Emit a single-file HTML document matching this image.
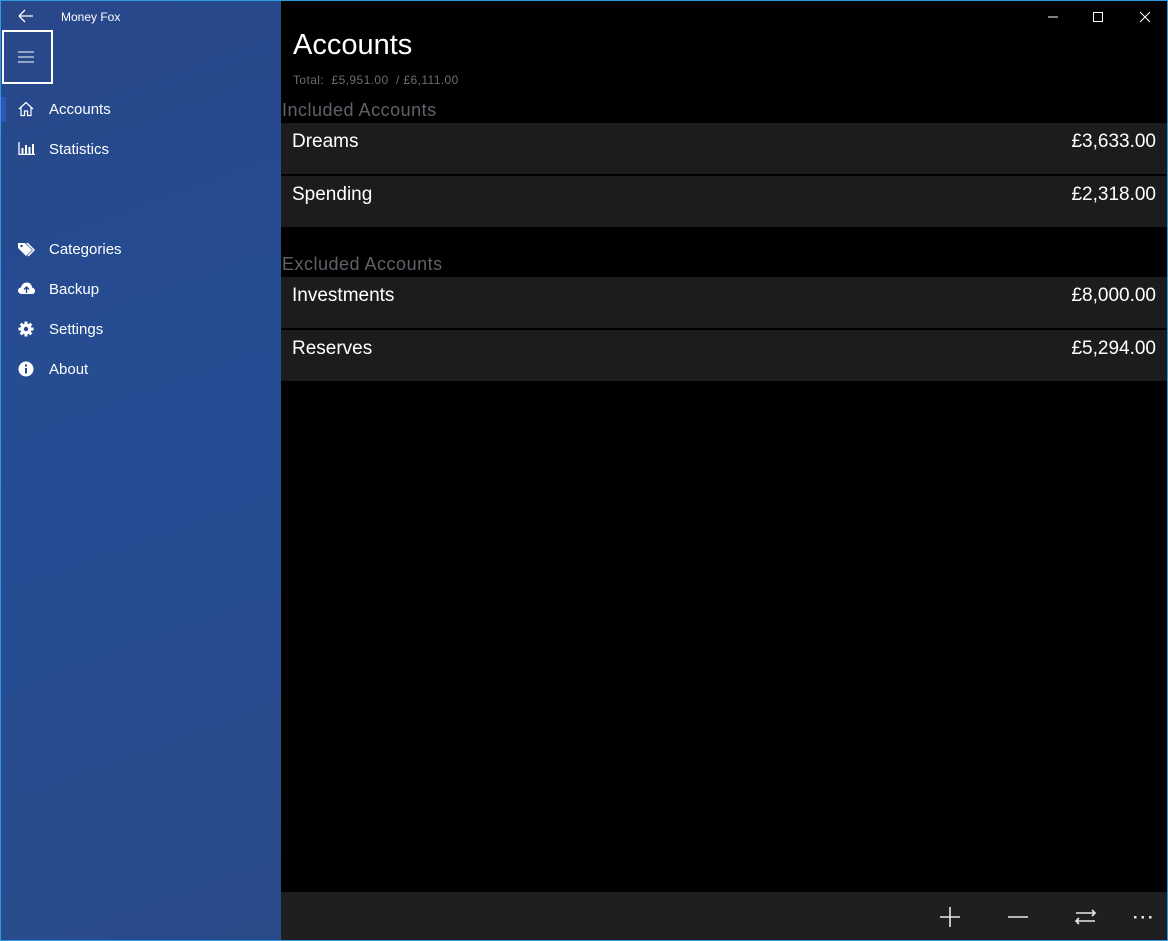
<!DOCTYPE html>
<html><head><style>
body{margin:0;width:1168px;height:941px;overflow:hidden;background:#000;font-family:"Liberation Sans",sans-serif;}
#win{position:absolute;left:0;top:0;width:1166px;height:939px;border:1px solid #2d9be2;background:#000;}
#side{position:absolute;left:0;top:0;width:280px;height:939px;background:linear-gradient(160deg,#28488a 0%,#254d94 50%,#2a4b8a 100%);color:#fff;}
.t{position:absolute;font-size:15px;color:#fff;}
.ic{position:absolute;left:17px;}
.row{position:absolute;left:280px;width:886px;height:51px;background:#1c1c1c;color:#fff;font-size:19px;}
.row .n{position:absolute;left:11px;top:8px;}
.row .v{position:absolute;right:11px;top:8px;}
.hdr{position:absolute;left:281px;font-size:18px;color:#5e6268;letter-spacing:.5px;}
</style></head><body><div id="win">
<div id="side">
<svg style="position:absolute;left:17px;top:8px" width="16" height="14"><path d="M1 7H15M1 7L7 1M1 7L7 13" stroke="#fff" stroke-width="1.3" fill="none"/></svg>
<div class="t" style="left:60px;top:9px;font-size:12px">Money Fox</div>
<div style="position:absolute;left:1px;top:29px;width:47px;height:50px;border:2px solid #fff"></div>
<svg style="position:absolute;left:17px;top:50px" width="16" height="12"><path d="M0 1H16M0 6H16M0 11H16" stroke="#fff" stroke-width="1"/></svg>
<div style="position:absolute;left:0;top:96px;width:5px;height:25px;background:#3355bb"></div>
<svg class="ic" style="top:100px" width="16" height="16"><path d="M1 8L8 1.5L15 8M3 6.5V14.5H6.5V10H9.5V14.5H13V6.5" stroke="#fff" stroke-width="1.2" fill="none"/></svg>
<div class="t" style="left:48px;top:100px">Accounts</div>
<svg class="ic" style="top:141px" width="17" height="13"><path d="M1 0V12.5H17" stroke="#fff" stroke-width="1.3" fill="none"/><rect x="3.5" y="6" width="2" height="6" fill="#fff"/><rect x="7" y="3" width="2" height="9" fill="#fff"/><rect x="10.5" y="5" width="2" height="7" fill="#fff"/><rect x="14" y="2" width="2" height="10" fill="#fff"/></svg>
<div class="t" style="left:48px;top:140px">Statistics</div>
<svg class="ic" style="top:241px" width="17" height="15"><path d="M0 1V6L8 14L14 8L7 1Z" fill="#fff"/><circle cx="3.5" cy="4" r="1.2" fill="#28488a"/><path d="M9 1L16 8L10 14" stroke="#fff" stroke-width="1.5" fill="none"/></svg>
<div class="t" style="left:48px;top:240px">Categories</div>
<svg class="ic" style="top:281px" width="17" height="13"><path d="M4 12C1 12 0 10 0 8.5C0 6.5 2 5.5 3 5.5C3.5 2.5 6 0.5 9 0.5C12 0.5 14 3 14 5.5C16 6 17 7.5 17 9C17 11 15.5 12 14 12Z" fill="#fff"/><path d="M8.5 11V5M6 7.5L8.5 5L11 7.5" stroke="#28488a" stroke-width="1.4" fill="none"/></svg>
<div class="t" style="left:48px;top:280px">Backup</div>
<svg class="ic" style="top:320px" width="16" height="16" viewBox="0 0 16 16"><g fill="#fff"><circle cx="8" cy="8" r="5.5"/><rect x="6.5" y="0.5" width="3" height="15"/><rect x="0.5" y="6.5" width="15" height="3"/><rect x="6.5" y="0.5" width="3" height="15" transform="rotate(45 8 8)"/><rect x="6.5" y="0.5" width="3" height="15" transform="rotate(-45 8 8)"/></g><circle cx="8" cy="8" r="2.2" fill="#28488a"/></svg>
<div class="t" style="left:48px;top:320px">Settings</div>
<svg class="ic" style="top:360px" width="16" height="16"><circle cx="8" cy="8" r="7.5" fill="#fff"/><rect x="7" y="7" width="2" height="5.5" fill="#28488a"/><circle cx="8" cy="4.5" r="1.2" fill="#28488a"/></svg>
<div class="t" style="left:48px;top:360px">About</div>
</div>
<svg style="position:absolute;left:1047px;top:10px" width="110" height="12"><path d="M0 6H10" stroke="#fff"/><rect x="45.5" y="1.5" width="9" height="9" stroke="#fff" fill="none"/><path d="M92 1L102 11M102 1L92 11" stroke="#fff"/></svg>
<div style="position:absolute;left:292px;top:28px;font-size:29px;color:#fff">Accounts</div>
<div style="position:absolute;left:292px;top:72px;font-size:12px;color:#6a6e74;letter-spacing:.4px">Total:&nbsp; £5,951.00&nbsp; / £6,111.00</div>
<div class="hdr" style="top:99px">Included Accounts</div>
<div class="row" style="top:122px"><span class="n">Dreams</span><span class="v">£3,633.00</span></div>
<div class="row" style="top:175px"><span class="n">Spending</span><span class="v">£2,318.00</span></div>
<div class="hdr" style="top:253px">Excluded Accounts</div>
<div class="row" style="top:276px"><span class="n">Investments</span><span class="v">£8,000.00</span></div>
<div class="row" style="top:329px"><span class="n">Reserves</span><span class="v">£5,294.00</span></div>
<div style="position:absolute;left:280px;top:891px;width:886px;height:48px;background:#1f1f1f"></div>
<svg style="position:absolute;left:930px;top:900px" width="230" height="30"><g stroke="#e6e6e6" stroke-width="1.6" fill="none"><path d="M19 6V26M9 16H29"/><path d="M77 16H97"/><path d="M145 12H164M161 9L164 12L161 15M164 20H145M148 17L145 20L148 23"/></g><g fill="#e6e6e6"><rect x="203" y="15" width="2.5" height="2.5"/><rect x="210.5" y="15" width="2.5" height="2.5"/><rect x="218" y="15" width="2.5" height="2.5"/></g></svg>
</div></body></html>
